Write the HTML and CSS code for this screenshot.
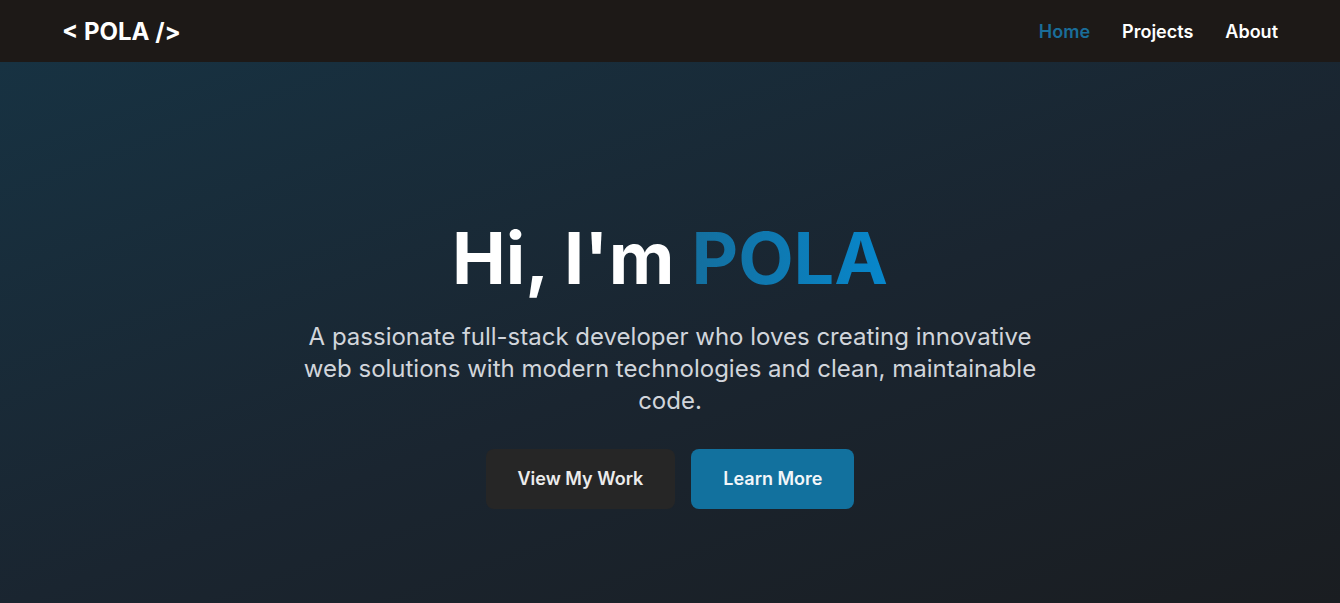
FILE: index.html
```html
<!DOCTYPE html>
<html lang="en">
<head>
<meta charset="utf-8">
<title>POLA</title>
<link rel="stylesheet" href="styles.css">
</head>
<body>
<header class="nav">
  <div class="nav-inner">
    <a class="logo" href="#">&lt; POLA /&gt;</a>
    <nav class="links">
      <a class="link active" href="#">Home</a>
      <a class="link" href="#">Projects</a>
      <a class="link" href="#">About</a>
    </nav>
  </div>
</header>
<main class="hero">
  <div class="hero-content">
    <h1 class="title">Hi, I'm <span class="accent">POLA</span></h1>
    <p class="lead">A passionate full-stack developer who loves creating innovative web solutions with modern technologies and clean, maintainable code.</p>
    <div class="actions">
      <a class="btn btn-dark" href="#">View My Work</a>
      <a class="btn btn-blue" href="#">Learn More</a>
    </div>
  </div>
</main>
</body>
</html>
```
FILE: styles.css
```css
* { box-sizing: border-box; margin: 0; padding: 0; }
html, body { height: 100%; }
body {
  font-family: Inter, "Noto Sans", sans-serif;
  background: #1a1c1f;
  color: #fff;
  overflow: hidden;
}
a { text-decoration: none; color: inherit; }
.nav {
  background: #1d1917;
  height: 62px;
}
.nav-inner {
  max-width: 1280px;
  margin: 0 auto;
  padding: 0 32px;
  height: 100%;
  display: flex;
  align-items: center;
  justify-content: space-between;
}
.logo {
  font-size: 24px;
  font-weight: 700;
  color: #fff;
}
.links { display: flex; gap: 32px; }
.link {
  font-size: 18px;
  font-weight: 600;
  color: #fff;
}
.link.active { color: #1a6d99; }
.hero {
  min-height: 100vh;
  background: linear-gradient(160deg, #173242 0%, #1a2530 50%, #1a1c1f 100%);
  display: flex;
  align-items: center;
  justify-content: center;
}
.hero-content {
  max-width: 768px;
  text-align: center;
  padding: 0 16px;
}
.title {
  font-size: 72px;
  font-weight: 700;
  line-height: 1.1;
  margin-bottom: 24px;
}
.accent {
  background: linear-gradient(90deg, #146f9e, #0787cc);
  -webkit-background-clip: text;
  background-clip: text;
  color: transparent;
}
.lead {
  font-size: 24px;
  line-height: 32px;
  color: #d1d5db;
  margin-bottom: 32px;
}
.actions {
  display: flex;
  justify-content: center;
  gap: 16px;
}
.btn {
  display: inline-block;
  font-size: 18px;
  line-height: 28px;
  font-weight: 600;
  padding: 16px 32px;
  border-radius: 8px;
}
.btn-dark { background: #262626; color: #ececec; }
.btn-blue { background: #12719e; color: #f2f6f9; }
```
